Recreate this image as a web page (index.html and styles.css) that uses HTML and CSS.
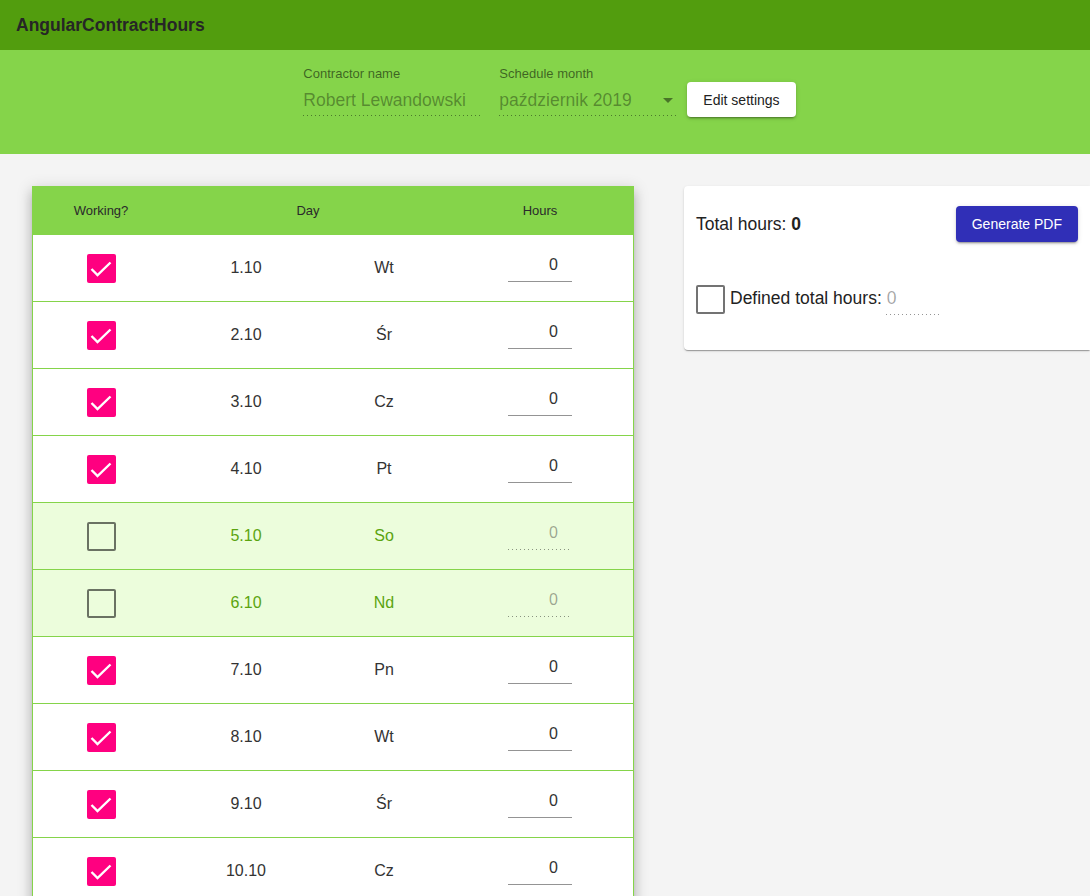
FILE: index.html
```html
<!DOCTYPE html>
<html lang="pl">
<head>
<meta charset="utf-8">
<title>AngularContractHours</title>
<link rel="stylesheet" href="styles.css">
</head>
<body>
<header class="toolbar">
  <span class="app-title">AngularContractHours</span>
</header>
<section class="settings">
  <div class="field field-name">
    <div class="field-label">Contractor name</div>
    <div class="field-value">Robert Lewandowski</div>
  </div>
  <div class="field field-month">
    <div class="field-label">Schedule month</div>
    <div class="field-value"><span>październik 2019</span><span class="arrow"></span></div>
  </div>
  <button class="btn btn-white">Edit settings</button>
</section>
<main class="main">
  <div class="table-card">
    <div class="row head">
      <div class="cell">Working?</div>
      <div class="cell">Day</div>
      <div class="cell">Hours</div>
    </div>
    <div class="row"><div class="cell"><span class="cb checked"><svg viewBox="0 0 29 29" width="29" height="29"><polyline points="4.5,15 10.5,21 23.5,8.5"/></svg></span></div><div class="cell">1.10</div><div class="cell">Wt</div><div class="cell"><span class="hours">0</span></div></div>
    <div class="row"><div class="cell"><span class="cb checked"><svg viewBox="0 0 29 29" width="29" height="29"><polyline points="4.5,15 10.5,21 23.5,8.5"/></svg></span></div><div class="cell">2.10</div><div class="cell">Śr</div><div class="cell"><span class="hours">0</span></div></div>
    <div class="row"><div class="cell"><span class="cb checked"><svg viewBox="0 0 29 29" width="29" height="29"><polyline points="4.5,15 10.5,21 23.5,8.5"/></svg></span></div><div class="cell">3.10</div><div class="cell">Cz</div><div class="cell"><span class="hours">0</span></div></div>
    <div class="row"><div class="cell"><span class="cb checked"><svg viewBox="0 0 29 29" width="29" height="29"><polyline points="4.5,15 10.5,21 23.5,8.5"/></svg></span></div><div class="cell">4.10</div><div class="cell">Pt</div><div class="cell"><span class="hours">0</span></div></div>
    <div class="row weekend"><div class="cell"><span class="cb"></span></div><div class="cell">5.10</div><div class="cell">So</div><div class="cell"><span class="hours">0</span></div></div>
    <div class="row weekend"><div class="cell"><span class="cb"></span></div><div class="cell">6.10</div><div class="cell">Nd</div><div class="cell"><span class="hours">0</span></div></div>
    <div class="row"><div class="cell"><span class="cb checked"><svg viewBox="0 0 29 29" width="29" height="29"><polyline points="4.5,15 10.5,21 23.5,8.5"/></svg></span></div><div class="cell">7.10</div><div class="cell">Pn</div><div class="cell"><span class="hours">0</span></div></div>
    <div class="row"><div class="cell"><span class="cb checked"><svg viewBox="0 0 29 29" width="29" height="29"><polyline points="4.5,15 10.5,21 23.5,8.5"/></svg></span></div><div class="cell">8.10</div><div class="cell">Wt</div><div class="cell"><span class="hours">0</span></div></div>
    <div class="row"><div class="cell"><span class="cb checked"><svg viewBox="0 0 29 29" width="29" height="29"><polyline points="4.5,15 10.5,21 23.5,8.5"/></svg></span></div><div class="cell">9.10</div><div class="cell">Śr</div><div class="cell"><span class="hours">0</span></div></div>
    <div class="row"><div class="cell"><span class="cb checked"><svg viewBox="0 0 29 29" width="29" height="29"><polyline points="4.5,15 10.5,21 23.5,8.5"/></svg></span></div><div class="cell">10.10</div><div class="cell">Cz</div><div class="cell"><span class="hours">0</span></div></div>
    <div class="row"><div class="cell"><span class="cb checked"><svg viewBox="0 0 29 29" width="29" height="29"><polyline points="4.5,15 10.5,21 23.5,8.5"/></svg></span></div><div class="cell">11.10</div><div class="cell">Pt</div><div class="cell"><span class="hours">0</span></div></div>
    <div class="row weekend"><div class="cell"><span class="cb"></span></div><div class="cell">12.10</div><div class="cell">So</div><div class="cell"><span class="hours">0</span></div></div>
    <div class="row weekend"><div class="cell"><span class="cb"></span></div><div class="cell">13.10</div><div class="cell">Nd</div><div class="cell"><span class="hours">0</span></div></div>
  </div>
  <aside class="summary">
    <div class="summary-top">
      <span class="total">Total hours: <b>0</b></span>
      <button class="btn btn-blue">Generate PDF</button>
    </div>
    <div class="defined">
      <span class="cb"></span>
      <span class="defined-label">Defined total hours:</span>
      <span class="defined-input">0</span>
    </div>
  </aside>
</main>
</body>
</html>
```
FILE: styles.css
```css
html, body {
  margin: 0;
  padding: 0;
}
body {
  background: #f4f4f4;
  font-family: "Liberation Sans", Arial, sans-serif;
  color: #333;
  overflow-x: hidden;
}

.toolbar {
  height: 50px;
  background: #529d0e;
  display: flex;
  align-items: center;
  padding-left: 16px;
}
.app-title {
  font-weight: bold;
  font-size: 17.5px;
  color: #262626;
}

.settings {
  height: 104px;
  box-sizing: border-box;
  background: #85d44a;
  display: flex;
  justify-content: center;
  align-items: flex-start;
  padding: 16px 0 0 9px;
}
.field {
  width: 177px;
}
.field-month {
  margin-left: 19px;
}
.field-label {
  font-size: 13px;
  line-height: 16px;
  color: rgba(0, 0, 0, 0.55);
}
.field-value {
  margin-top: 6px;
  height: 24px;
  line-height: 24px;
  font-size: 17.5px;
  color: rgba(0, 0, 0, 0.36);
  padding-bottom: 4px;
  background-image: linear-gradient(to right, rgba(0, 0, 0, 0.42) 0%, rgba(0, 0, 0, 0.42) 33%, transparent 0%);
  background-size: 4px 1px;
  background-repeat: repeat-x;
  background-position: 0 bottom;
  display: flex;
  justify-content: space-between;
  align-items: center;
  white-space: nowrap;
}
.arrow {
  width: 0;
  height: 0;
  border-left: 5px solid transparent;
  border-right: 5px solid transparent;
  border-top: 5px solid rgba(0, 0, 0, 0.45);
  margin-right: 3px;
}

.btn {
  font-family: "Liberation Sans", Arial, sans-serif;
  font-size: 14px;
  border: none;
  border-radius: 4px;
  height: 36px;
  padding: 0 16px;
  white-space: nowrap;
  cursor: pointer;
  box-shadow: 0 3px 1px -2px rgba(0, 0, 0, 0.2), 0 2px 2px 0 rgba(0, 0, 0, 0.14), 0 1px 5px 0 rgba(0, 0, 0, 0.12);
}
.btn-white {
  background: #fff;
  color: #222;
  margin: 16px 0 0 11px;
  height: 35px;
}
.btn-blue {
  background: #302fb7;
  color: #fff;
}

.main {
  display: flex;
  align-items: flex-start;
  gap: 50px;
  padding: 32px 0 0 32px;
}

.table-card {
  width: 602px;
  flex: none;
  box-sizing: border-box;
  background: #fff;
  border: 1px solid #85d44a;
  border-top: none;
  box-shadow: 0 5px 5px -3px rgba(0, 0, 0, 0.2), 0 8px 10px 1px rgba(0, 0, 0, 0.14), 0 3px 14px 2px rgba(0, 0, 0, 0.12);
}
.row {
  display: grid;
  grid-template-columns: 136px 154px 122px 1fr;
  height: 66px;
  border-bottom: 1px solid #85d44a;
  font-size: 16px;
  color: #333;
}
.row.head {
  height: 49px;
  background: #85d44a;
  font-size: 13px;
  color: #2a2a2a;
  border-bottom: none;
  grid-template-columns: 136px 278px 1fr;
}
.cell {
  display: flex;
  align-items: center;
  justify-content: center;
}
.row.weekend {
  background: #ecfddc;
  color: #5ba40f;
}

.cb {
  display: inline-block;
  width: 29px;
  height: 29px;
  box-sizing: border-box;
  border: 2px solid rgba(0, 0, 0, 0.55);
  border-radius: 2px;
  flex: none;
}
.cb.checked {
  border: none;
  background: #ff0080;
}
.cb svg {
  display: block;
}
.cb polyline {
  fill: none;
  stroke: #fff;
  stroke-width: 2.4;
}

.hours {
  display: block;
  width: 64px;
  height: 28px;
  margin-left: 2px;
  box-sizing: border-box;
  line-height: 22px;
  padding: 0 14px 5px 0;
  text-align: right;
  font-size: 16px;
  color: #333;
  border-bottom: 1px solid #949494;
}
.weekend .hours {
  color: rgba(0, 0, 0, 0.36);
  border-bottom: none;
  background-image: linear-gradient(to right, rgba(0, 0, 0, 0.42) 0%, rgba(0, 0, 0, 0.42) 33%, transparent 0%);
  background-size: 4px 1px;
  background-repeat: repeat-x;
  background-position: 0 bottom;
  width: 62px;
  margin-left: 0;
  padding-right: 12px;
}

.summary {
  flex: 1;
  background: #fff;
  border-radius: 4px 0 0 4px;
  padding: 20px 12px 35px 12px;
  box-shadow: 0 2px 1px -1px rgba(0, 0, 0, 0.2), 0 1px 1px 0 rgba(0, 0, 0, 0.14), 0 1px 3px 0 rgba(0, 0, 0, 0.12);
}
.summary-top {
  height: 36px;
  display: flex;
  justify-content: space-between;
  align-items: center;
}
.total {
  font-size: 17.5px;
  color: #222;
}
.defined {
  margin-top: 43px;
  display: flex;
  align-items: flex-start;
}
.defined-label {
  margin-left: 5px;
  font-size: 17.5px;
  line-height: 27px;
  color: #222;
}
.defined-input {
  margin-left: 4px;
  width: 55px;
  height: 30px;
  line-height: 27px;
  font-size: 17.5px;
  color: rgba(0, 0, 0, 0.36);
  padding-left: 1px;
  box-sizing: border-box;
  background-image: linear-gradient(to right, rgba(0, 0, 0, 0.42) 0%, rgba(0, 0, 0, 0.42) 33%, transparent 0%);
  background-size: 4px 1px;
  background-repeat: repeat-x;
  background-position: 0 bottom;
}
```
